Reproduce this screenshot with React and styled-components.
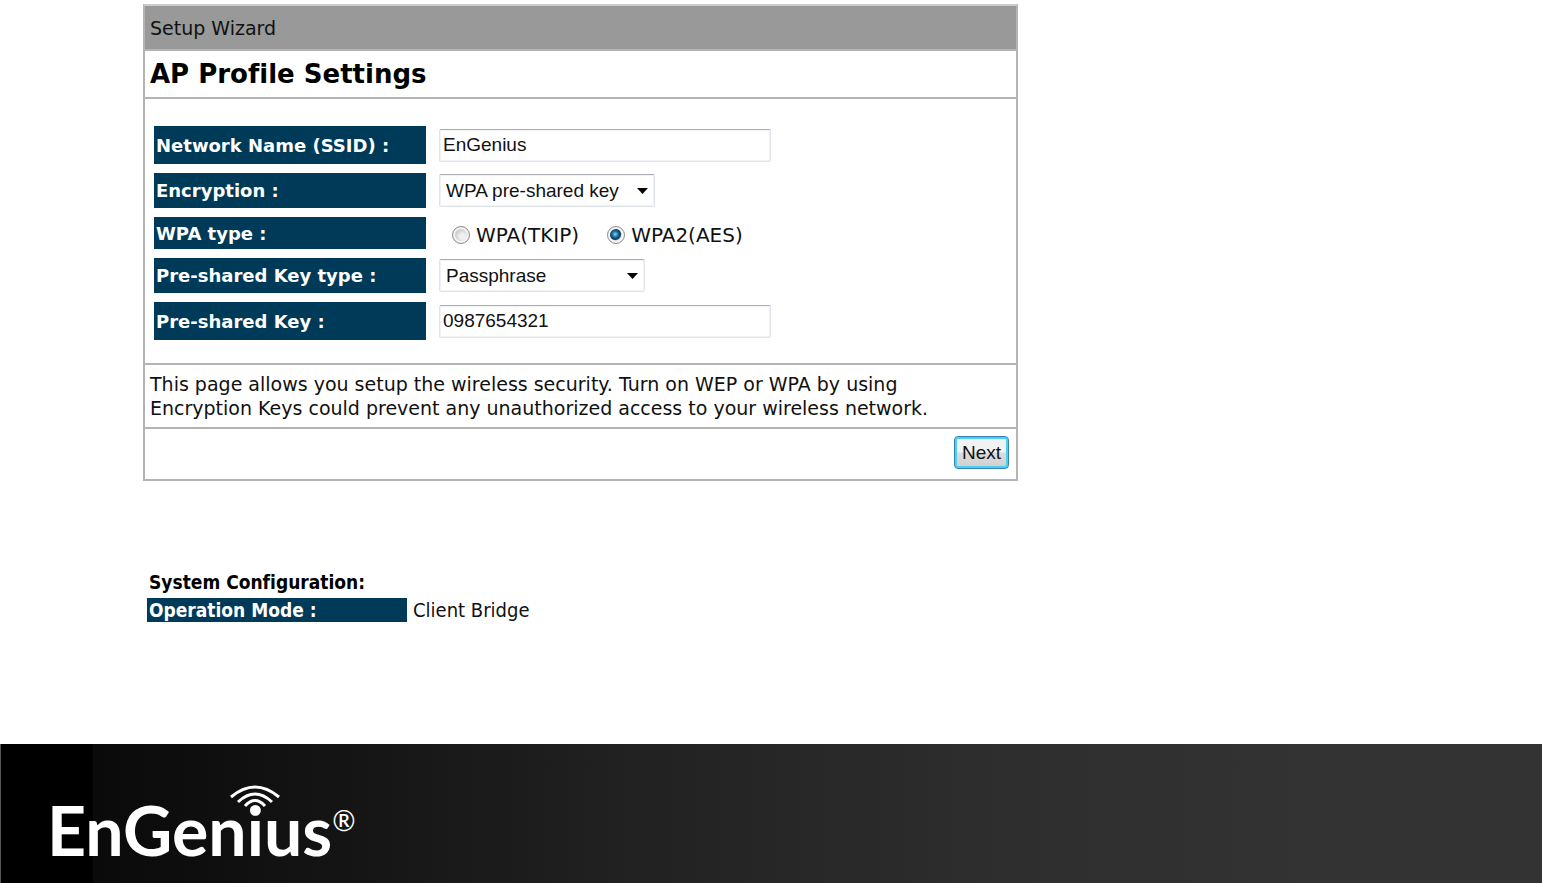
import { useState } from "react";
import styled, { createGlobalStyle } from "styled-components";

const verdana = `"DejaVu Sans", Verdana, sans-serif`;
const tahoma = `"DejaVu Sans Condensed", "DejaVu Sans", Tahoma, sans-serif`;
const arial = `"Liberation Sans", Arial, sans-serif`;

export default function App() {
  const [ssid, setSsid] = useState("EnGenius");
  const [encryption, setEncryption] = useState("WPA pre-shared key");
  const [wpaType, setWpaType] = useState("aes");
  const [keyType, setKeyType] = useState("Passphrase");
  const [key, setKey] = useState("0987654321");

  return (
    <Page>
      <GlobalStyle />
      <Content>
        <Wizard onSubmit={(e) => e.preventDefault()}>
          <Header>Setup Wizard</Header>
          <Title>AP Profile Settings</Title>
          <Fields>
            <Row $height="38px">
              <Label as="label" htmlFor="ssid">Network Name (SSID) :</Label>
              <TextInput id="ssid" value={ssid} onChange={(e) => setSsid(e.target.value)} />
            </Row>
            <Row $height="35px">
              <Label as="label" htmlFor="encryption">Encryption :</Label>
              <SelectBox $width="216px">
                <select id="encryption" value={encryption} onChange={(e) => setEncryption(e.target.value)}>
                  <option>WPA pre-shared key</option>
                  <option>WEP</option>
                  <option>Disable</option>
                </select>
                <Arrow />
              </SelectBox>
            </Row>
            <Row $height="32px" role="radiogroup" aria-labelledby="wpa-type">
              <Label id="wpa-type">WPA type :</Label>
              <Radios>
                <label>
                  <Radio name="wpa" checked={wpaType === "tkip"} onChange={() => setWpaType("tkip")} />
                  WPA(TKIP)
                </label>
                <label>
                  <Radio name="wpa" checked={wpaType === "aes"} onChange={() => setWpaType("aes")} />
                  WPA2(AES)
                </label>
              </Radios>
            </Row>
            <Row $height="35px">
              <Label as="label" htmlFor="key-type">Pre-shared Key type :</Label>
              <SelectBox $width="206px">
                <select id="key-type" value={keyType} onChange={(e) => setKeyType(e.target.value)}>
                  <option>Passphrase</option>
                  <option>Hex</option>
                </select>
                <Arrow />
              </SelectBox>
            </Row>
            <Row $height="38px">
              <Label as="label" htmlFor="key">Pre-shared Key :</Label>
              <TextInput id="key" value={key} onChange={(e) => setKey(e.target.value)} />
            </Row>
          </Fields>
          <Help>
            This page allows you setup the wireless security. Turn on WEP or WPA by using
            Encryption Keys could prevent any unauthorized access to your wireless network.
          </Help>
          <Actions>
            <NextButton type="submit">Next</NextButton>
          </Actions>
        </Wizard>

        <System>
          <h2>System Configuration:</h2>
          <dl>
            <dt>Operation Mode :</dt>
            <dd>Client Bridge</dd>
          </dl>
        </System>
      </Content>

      <Footer>
        <Logo>
          EnGen
          <LetterI>
            i
            <Waves viewBox="0 0 52 24" aria-hidden="true">
              <path d="M2 12 Q26 -8 50 12" />
              <path d="M9 17 Q26 1 43 17" />
              <path d="M16 21 Q26 10 36 21" />
            </Waves>
          </LetterI>
          us
          <sup>®</sup>
        </Logo>
      </Footer>
    </Page>
  );
}

function Arrow() {
  return (
    <ArrowIcon viewBox="0 0 11 6" aria-hidden="true">
      <path d="M0 0h11L5.5 6z" />
    </ArrowIcon>
  );
}

const GlobalStyle = createGlobalStyle`
  * {
    box-sizing: border-box;
  }
  body {
    margin: 0;
    background: #fff;
    color: #111;
    font-family: ${verdana};
    font-size: 19px;
    font-variant-ligatures: none;
  }
`;

const Page = styled.div`
  min-height: 100vh;
  display: flex;
  flex-direction: column;
`;

const Content = styled.main`
  flex: 1;
  padding: 4px 16px 0 143px;
`;

const Wizard = styled.form`
  max-width: 875px;
  border: 2px solid #b4b4b4;
  border-top-color: #ccc;
`;

const Header = styled.div`
  padding: 10px 5px 9px;
  background: #999;
  line-height: 24px;
`;

const Title = styled.h1`
  margin: 0;
  padding: 8px 5px;
  border-top: 2px solid #b4b4b4;
  color: #000;
  font-size: 26px;
  line-height: 30px;
`;

const Fields = styled.div`
  display: flex;
  flex-direction: column;
  gap: 9px;
  padding: 27px 9px 23px;
  border-top: 2px solid #b4b4b4;
`;

const Row = styled.div`
  display: flex;
  align-items: center;
  gap: 13px;
  min-height: ${({ $height }) => $height};
`;

const Label = styled.span`
  display: flex;
  align-items: center;
  align-self: stretch;
  flex: 0 0 272px;
  padding-left: 2px;
  background: #003a59;
  color: #fff;
  font-size: 18px;
  font-weight: bold;
`;

const TextInput = styled.input.attrs({ type: "text" })`
  flex: 0 1 332px;
  min-width: 0;
  height: 33px;
  padding: 0 3px;
  border: 1px solid #dfe3ea;
  border-top-color: #abadb3;
  border-radius: 2px;
  box-shadow: inset 0 0 0 1px #f0f2f6;
  background: #fff;
  color: #111;
  font: 19px ${arial};
`;

const SelectBox = styled.span`
  position: relative;
  width: ${({ $width }) => $width};
  select {
    display: block;
    width: 100%;
    height: 33px;
    padding: 0 24px 0 6px;
    appearance: none;
    border: 1px solid #dfe3ea;
    border-top-color: #abadb3;
    border-radius: 2px;
    box-shadow: inset 0 0 0 1px #f0f2f6;
    background: #fff;
    color: #111;
    font: 19px ${arial};
  }
`;

const ArrowIcon = styled.svg`
  position: absolute;
  top: 14px;
  right: 7px;
  width: 11px;
  height: 6px;
  pointer-events: none;
`;

const Radios = styled.div`
  display: flex;
  gap: 28px;
  padding: 3px 0 0 13px;
  font-size: 20px;
  line-height: 24px;
  label {
    display: flex;
    align-items: center;
    gap: 6px;
  }
`;

const Radio = styled.input.attrs({ type: "radio" })`
  width: 18px;
  height: 18px;
  margin: 0;
  appearance: none;
  border: 1px solid #8e8f8f;
  border-radius: 50%;
  background: radial-gradient(circle at 60% 60%, #f0f0f0 0 20%, #c4c7ca 60%);
  box-shadow: inset 0 0 0 2px #f4f4f4;
  &:checked {
    background: radial-gradient(circle at 45% 45%, #8fd3f0 0, #1b6fa4 24%, #0b3454 42%, #e8e8e8 52%);
  }
`;

const Help = styled.p`
  margin: 0;
  padding: 7px 64px 7px 5px;
  border-top: 2px solid #b4b4b4;
  line-height: 24px;
`;

const Actions = styled.div`
  display: flex;
  justify-content: flex-end;
  padding: 7px 7px 10px;
  border-top: 2px solid #b4b4b4;
`;

const NextButton = styled.button`
  height: 33px;
  padding: 0 7px;
  border: 1px solid #3c7fb1;
  border-radius: 4px;
  box-shadow: inset 0 0 0 2px #48d1f5;
  background: linear-gradient(#f2f2f2 0 48%, #dcdcdc 52%, #cfcfcf);
  color: #111;
  font: 19px ${arial};
`;

const System = styled.section`
  margin: 85px 0 60px 4px;
  font-family: ${tahoma};
  h2 {
    margin: 0;
    padding-left: 2px;
    color: #000;
    font-size: 19px;
    line-height: 32px;
  }
  dl {
    display: flex;
    gap: 6px;
    margin: 0;
    line-height: 24px;
  }
  dt {
    flex: 0 0 260px;
    padding-left: 2px;
    background: #003a59;
    color: #fff;
    font-weight: bold;
  }
  dd {
    margin: 0;
    font-size: 20px;
  }
`;

const Footer = styled.footer`
  height: 139px;
  margin-right: 1px;
  padding: 41px 46px 0;
  border-left: 1px solid #555;
  background: linear-gradient(to right, #000 0 6%, #0a0a0a 6%, #151515 23%, #222 42%, #2d2d2d 63%, #333 85%);
`;

const Logo = styled.div`
  display: flex;
  color: #fff;
  font-family: Lato, sans-serif;
  font-size: 68px;
  font-weight: bold;
  line-height: 90px;
  sup {
    font-size: 28px;
    font-weight: normal;
    line-height: 70px;
  }
`;

const LetterI = styled.span`
  position: relative;
`;

const Waves = styled.svg`
  position: absolute;
  top: 0;
  left: 50%;
  width: 52px;
  height: 24px;
  margin-left: -26px;
  fill: none;
  stroke: #fff;
  stroke-width: 3;
`;
